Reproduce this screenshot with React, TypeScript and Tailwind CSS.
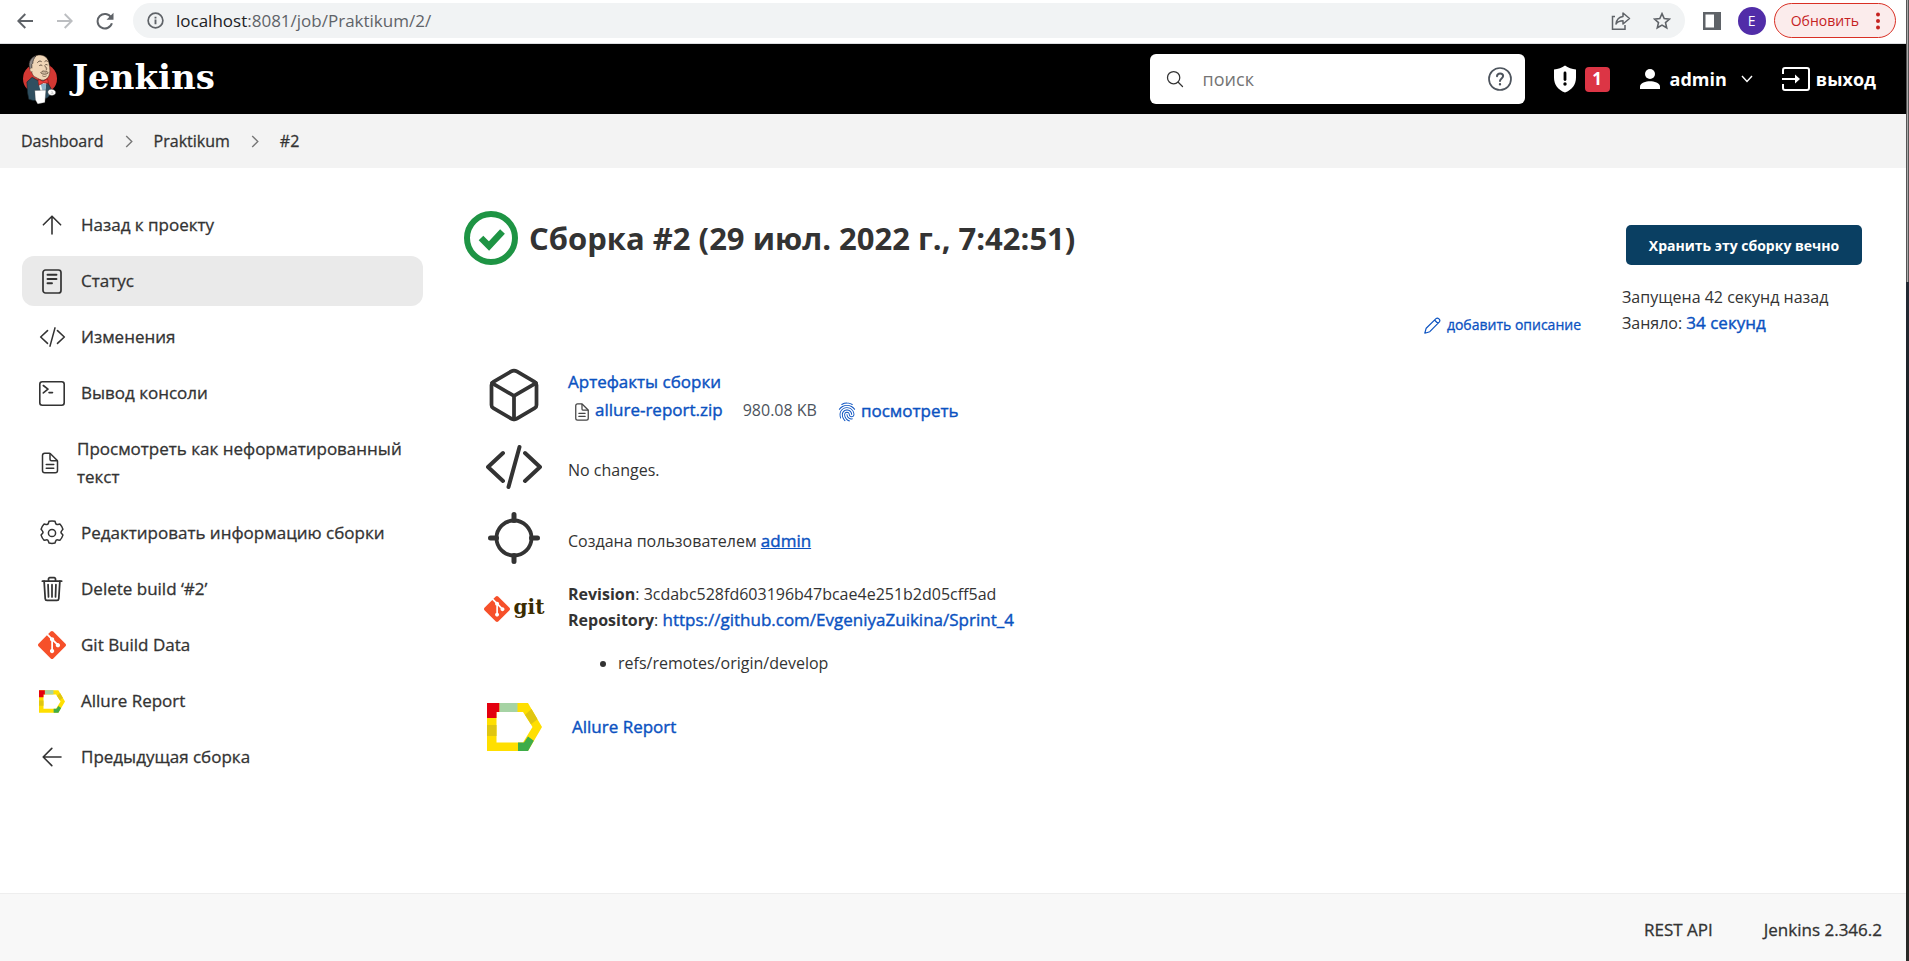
import type { ReactNode } from "react";
import {
  IoCubeOutline,
  IoDocumentTextOutline,
  IoFingerPrintOutline,
  IoSearchOutline,
  IoTrashOutline,
} from "react-icons/io5";
import { SiGit } from "react-icons/si";

const link = "text-[17px] text-[#0b52c1] [-webkit-text-stroke:0.4px] hover:underline";

function ArrowIcon({ className }: { className: string }) {
  return (
    <svg viewBox="0 0 20 20" className={className} fill="none" stroke="currentColor" strokeWidth="1.6" strokeLinecap="round" strokeLinejoin="round" aria-hidden="true">
      <path d="M19 10H1.5M9.8 1.4L1.2 10l8.6 8.6" />
    </svg>
  );
}

function BrowserArrow({ className }: { className: string }) {
  return (
    <svg viewBox="0 0 16 16" className={className} fill="none" stroke="currentColor" strokeWidth="1.9" aria-hidden="true">
      <path d="M16 8H1.500M8.300 1L1.300 8l7 7" />
    </svg>
  );
}

function CodeIcon({ className, weight }: { className: string; weight: number }) {
  return (
    <svg viewBox="0 0 56 44" className={className} fill="none" stroke="currentColor" strokeWidth={weight} strokeLinecap="round" strokeLinejoin="round" aria-hidden="true">
      <path d="M17 8L2 22l15 14M39 8l15 14-15 14M33.500 2L22.500 42" />
    </svg>
  );
}

function StatusIcon() {
  return (
    <svg viewBox="0 0 20 25" className="h-[25px] w-5" fill="none" stroke="currentColor" strokeLinecap="round" aria-hidden="true">
      <rect x="1" y="1" width="18" height="23" rx="2.500" strokeWidth="1.700" />
      <path d="M5.500 5.800h9M5.500 10h9M5.500 14.200h4.500" strokeWidth="1.900" />
    </svg>
  );
}

function ConsoleIcon() {
  return (
    <svg viewBox="0 0 26 25" className="h-[25px] w-[26px]" fill="none" stroke="currentColor" strokeWidth="1.600" strokeLinecap="round" strokeLinejoin="round" aria-hidden="true">
      <rect x="0.800" y="0.800" width="24.400" height="23.400" rx="2.500" />
      <path d="M4.300 4.500l4.700 3.700-4.700 3.700M10 11.600h3.500" />
    </svg>
  );
}

function GearIcon() {
  return (
    <svg viewBox="0 0 24 26" className="h-[26px] w-6" fill="none" stroke="currentColor" strokeWidth="1.500" strokeLinejoin="round" aria-hidden="true">
      <path d="M9 1.300c2-.5 4-.5 6 0l.6 1.900c.3 1 1.300 1.500 2.300 1.300l2-.4c1.400 1.500 2.400 3.200 3 5.200l-1.300 1.600c-.7.800-.7 1.900 0 2.700l1.300 1.500c-.6 2-1.600 3.700-3 5.200l-2-.4c-1-.2-2 .3-2.300 1.300l-.6 1.900c-2 .5-4 .5-6 0l-.6-1.900c-.3-1-1.300-1.500-2.300-1.300l-2 .4c-1.400-1.500-2.400-3.200-3-5.200l1.300-1.500c.7-.8.7-1.900 0-2.700L1.100 9.300c.6-2 1.600-3.700 3-5.200l2 .4c1 .2 2-.3 2.300-1.300z" />
      <circle cx="12" cy="13" r="3.600" />
    </svg>
  );
}

function AllureIcon({ className }: { className: string }) {
  return (
    <svg viewBox="0 0 55 48" className={className} aria-hidden="true">
      <path fill="#ffdf00" d="M0 0h41l14 24-14 24H0zM9.500 9v30.500H36L45.500 24 36 9z" fillRule="evenodd" />
      <path fill="#e3000f" d="M0 0h12.500v9h-3v6H0z" />
      <path fill="#a6d3a4" d="M12.500 0h18v9h-18z" />
      <path fill="#e0c611" d="M44.500 6l6 10.300-6.500 5L38 11.800zM0 22h9.500v11H0z" />
      <path fill="#3eac49" d="M41 33.500l5.800 4.300L41 48H31v-8.500h6z" />
    </svg>
  );
}

function ButlerLogo() {
  return (
    <svg viewBox="35 27 110 155" className="h-[51px] w-9" aria-hidden="true">
      <ellipse cx="90" cy="102" rx="52" ry="48" fill="#d33833" />
      <path d="M50 112l16-14 18 10 22-1 8 8 10 18-4 20-8 8-42 8-14-4-4-20z" fill="#2f4f60" stroke="#17262e" strokeWidth="2" />
      <path d="M84 108l8 34 14-4 4-30z" fill="#f4f4f0" />
      <path d="M92 118l6 22 8-2 3-20z" fill="#8db3c9" />
      <path d="M60 66c-5-18 8-34 26-36 18-2 30 10 32 28 2 14 4 24-1 36-5 10-14 14-22 12-10-2-14-8-22-10-6-6-8-10-8-16-5-2-6-8-5-14z" fill="#f0d6b7" stroke="#3a2c20" strokeWidth="1.500" />
      <path d="M58 68c-5-18 6-32 20-36-7 8-10 15-10 23l-3 3v12l-4 4z" fill="#8e8a88" stroke="#26211e" strokeWidth="2" />
      <path d="M66 70c-5-3-8 2-6 7s6 5 7 2" fill="#f0d6b7" stroke="#6d5948" strokeWidth="1.500" />
      <path d="M82 53c4-5 9-6 13-3M104 50c4-4 8-3 10 0M88 62c3-2 6-2 9 0M106 60c3-2 5-1 7 0" fill="none" stroke="#33261c" strokeWidth="2.500" />
      <path d="M103 62c7 5 10 10 5 15M92 84c5-7 11-7 14-3 5-3 8 0 9 4-8 5-16 5-23-1z" fill="#cbb499" stroke="#493728" strokeWidth="2" />
      <path d="M97 93c4 3 9 3 13 0" fill="none" stroke="#493728" strokeWidth="2" />
      <path d="M84 103l15 7 14-8 3 14-16-1-14 7z" fill="#ef3d3a" stroke="#7d1513" strokeWidth="2" />
      <path d="M74 138l34-1-3 38-22 4-7-12z" fill="#fff" stroke="#3c3c3c" strokeWidth="1" />
      <path d="M116 137c8-6 20-2 22 6 1 9-9 12-18 9-6-3-8-10-4-15z" fill="#fff" stroke="#4a4a4a" strokeWidth="1.500" />
      <path d="M125 141l5 3M123 146l8 1" stroke="#888" strokeWidth="1.500" />
    </svg>
  );
}

type Task = { label: string; icon: ReactNode; active?: boolean; tight?: boolean };

const tasks: Task[] = [
  { label: "Назад к проекту", icon: <ArrowIcon className="size-5 rotate-90" /> },
  { label: "Статус", icon: <StatusIcon />, active: true },
  { label: "Изменения", icon: <CodeIcon className="h-5 w-[27px]" weight={3.4} /> },
  { label: "Вывод консоли", icon: <ConsoleIcon /> },
  {
    label: "Просмотреть как неформатированный текст",
    icon: <IoDocumentTextOutline className="size-6" />,
    tight: true,
  },
  { label: "Редактировать информацию сборки", icon: <GearIcon /> },
  { label: "Delete build ‘#2’", icon: <IoTrashOutline className="size-7" /> },
  { label: "Git Build Data", icon: <SiGit className="size-7 text-[#f6502a]" /> },
  { label: "Allure Report", icon: <AllureIcon className="h-[23px] w-[26px]" /> },
  { label: "Предыдущая сборка", icon: <ArrowIcon className="size-5" /> },
];

function BrowserBar() {
  return (
    <div className="flex h-11 items-center border-b border-[#dcdee1] bg-white pr-[10px] pb-[2px] pl-3 text-[#5f6368]">
      <div className="flex items-center gap-[14px]">
        <button aria-label="Назад" className="grid size-[26px] place-items-center">
          <BrowserArrow className="size-4" />
        </button>
        <button aria-label="Вперёд" disabled className="grid size-[26px] place-items-center text-[#bcbec1]">
          <BrowserArrow className="size-4 rotate-180" />
        </button>
        <button aria-label="Обновить страницу" className="grid size-[26px] place-items-center">
          <svg viewBox="0 0 18 18" className="size-[18px]" aria-hidden="true">
            <path d="M15.200 5.500A7.300 7.300 0 1 0 15.900 11.300" fill="none" stroke="currentColor" strokeWidth="2" />
            <path d="M17.500.8v7h-7z" fill="currentColor" />
          </svg>
        </button>
      </div>
      <div className="ml-[15px] flex h-[35px] flex-1 items-center rounded-full bg-[#f1f3f4] px-[14px]">
        <svg viewBox="0 0 18 18" className="size-[17px]" aria-hidden="true">
          <circle cx="9" cy="9" r="7.800" fill="none" stroke="currentColor" strokeWidth="1.800" />
          <path d="M8 8h2v5H8zM8 5h2v2H8z" fill="currentColor" />
        </svg>
        <div className="ml-3 flex-1 text-[17px]">
          <span className="text-[#202124]">localhost</span>:8081/job/Praktikum/2/
        </div>
        <button aria-label="Поделиться" className="mr-[22px]">
          <svg viewBox="0 0 20 18" className="h-[18px] w-5" fill="none" stroke="currentColor" strokeWidth="1.500" aria-hidden="true">
            <path d="M4 4.500H1.500v12.700H14V13" />
            <path d="M12 1l6.500 5.500L12 12V8.800c-3.500 0-5.500 1-7 3.200.6-4.500 3-7 7-7.500z" strokeLinejoin="round" />
          </svg>
        </button>
        <button aria-label="Добавить в закладки">
          <svg viewBox="0 0 18 18" className="size-[18px]" fill="none" stroke="currentColor" strokeWidth="1.600" aria-hidden="true">
            <path d="M9 1.700l2.200 4.900 5.300.5-4 3.500 1.200 5.200L9 13.100l-4.700 2.700 1.200-5.200-4-3.500 5.300-.5z" />
          </svg>
        </button>
      </div>
      <button aria-label="Боковая панель" className="ml-[18px]">
        <svg viewBox="0 0 18 18" className="size-[18px]" aria-hidden="true">
          <path d="M0 0h18v18H0zM2.500 2.500v13H11v-13z" fill="currentColor" fillRule="evenodd" />
        </svg>
      </button>
      <button className="ml-[17px] size-7 rounded-full bg-[#512da8] text-sm text-white">E</button>
      <button className="ml-2 flex h-[35px] items-center justify-between gap-[17px] rounded-full border border-[#d93025] bg-[#fbecec] pr-[15px] pl-4 text-sm text-[#c5221f]">
        Обновить
        <svg viewBox="0 0 4 18" className="h-[18px] w-1" fill="currentColor" aria-hidden="true">
          <circle cx="2" cy="2.500" r="2" />
          <circle cx="2" cy="9" r="2" />
          <circle cx="2" cy="15.500" r="2" />
        </svg>
      </button>
    </div>
  );
}

function Header() {
  return (
    <header className="flex h-[70px] items-center bg-black pr-[30px] pl-[22px] text-white">
      <a href="#" className="flex items-center gap-[14px]">
        <ButlerLogo />
        <span className="pb-1 font-['DejaVu_Serif',serif] text-[34px] leading-10 font-bold">Jenkins</span>
      </a>
      <form className="ml-auto flex h-[50px] w-[375px] items-center rounded-md bg-white pr-[13px] pl-[15px] text-[#333]">
        <IoSearchOutline className="size-5" aria-hidden="true" />
        <input aria-label="поиск" placeholder="поиск" className="ml-[18px] min-w-0 flex-1 text-[18px] outline-none placeholder:text-[#757575]" />
        <a href="#" aria-label="Справка">
          <svg viewBox="0 0 24 24" className="size-6" fill="none" stroke="#4d545d" strokeWidth="1.700" strokeLinecap="round" aria-hidden="true">
            <circle cx="12" cy="12" r="11" />
            <path d="M9 9.200c.2-1.800 1.500-2.700 3.100-2.700 1.700 0 3 1 3 2.600 0 2.400-3.100 2.400-3.100 5" strokeWidth="2" />
            <circle cx="12" cy="17.200" r="0.600" strokeWidth="1.200" />
          </svg>
        </a>
      </form>
      <a href="#" className="ml-7 flex items-center gap-2">
        <svg viewBox="0 0 24 28" className="h-7 w-6" aria-hidden="true">
          <path d="M12 .5c3 2.500 7 3.500 11 4v8c0 7-4 12.500-11 15-7-2.500-11-8-11-15v-8c4-.5 8-1.500 11-4z" fill="#fff" />
          <path d="M12 8v6.500" stroke="#000" strokeWidth="2.800" strokeLinecap="round" />
          <circle cx="12" cy="19" r="1.700" />
        </svg>
        <span className="grid size-[25px] place-items-center rounded-[4px] bg-[#dc3545] text-[17px] leading-6 font-bold">1</span>
      </a>
      <a href="#" className="ml-[30px] flex items-center gap-[10px] text-[18px] font-bold">
        <svg viewBox="0 0 20 20" className="size-5" fill="#fff" aria-hidden="true">
          <circle cx="10" cy="5" r="5" />
          <path d="M0 20v-2.500C0 14 6 12.300 10 12.300s10 1.700 10 5.200V20z" />
        </svg>
        admin
      </a>
      <button aria-label="Меню пользователя" className="ml-[14px]">
        <svg viewBox="0 0 12 8" className="h-2 w-3" fill="none" stroke="#fff" strokeWidth="1.400" aria-hidden="true">
          <path d="M1 1l5 5.500L11 1" />
        </svg>
      </button>
      <a href="#" className="ml-[29px] flex items-center gap-[6px] text-[18px] font-bold">
        <svg viewBox="0 0 28 24" className="h-6 w-7" fill="none" stroke="#fff" strokeWidth="2" aria-hidden="true">
          <path d="M1 7V3a2 2 0 0 1 2-2h22a2 2 0 0 1 2 2v18a2 2 0 0 1-2 2H3a2 2 0 0 1-2-2v-4M0 12h16" />
          <path d="M13 7.500l5 4.500-5 4.500z" fill="#fff" stroke="none" />
        </svg>
        выход
      </a>
    </header>
  );
}

function Crumb() {
  return (
    <svg viewBox="0 0 8 14" className="h-[13px] w-2" fill="none" stroke="#777" strokeWidth="1.500" aria-hidden="true">
      <path d="M1 1l6 6-6 6" />
    </svg>
  );
}

function Row({ icon, children }: { icon: ReactNode; children: ReactNode }) {
  return (
    <div className="flex gap-[26px]">
      <div className="flex h-14 w-14 shrink-0 items-center justify-center">{icon}</div>
      <div className="flex-1">{children}</div>
    </div>
  );
}

export default function App() {
  return (
    <div className="flex min-h-screen bg-white font-['Open_Sans','Noto_Sans',sans-serif] text-base text-[#333]">
      <div className="flex min-w-0 flex-1 flex-col">
        <BrowserBar />
        <Header />
        <nav aria-label="Навигация" className="flex h-[54px] items-center gap-[21px] bg-[#f3f3f3] px-[21px] [-webkit-text-stroke:0.3px]">
          <a href="#">Dashboard</a>
          <Crumb />
          <a href="#">Praktikum</a>
          <Crumb />
          <a href="#">#2</a>
        </nav>

        <div className="flex flex-1">
          <nav aria-label="Задачи" className="flex w-[464px] shrink-0 flex-col gap-[6px] pt-8 pr-[41px] pl-[22px]">
            {tasks.map((task) => (
              <a
                key={task.label}
                href="#"
                className={`flex items-center gap-[15px] rounded-xl py-[11px] pl-4 text-[17px] leading-7 [-webkit-text-stroke:0.3px] ${
                  task.active ? "bg-[#eaeaea]" : ""
                }`}
              >
                <span className={`grid h-7 shrink-0 place-items-center ${task.tight ? "w-6" : "w-7"}`}>{task.icon}</span>
                {task.label}
              </a>
            ))}
          </nav>

          <main className="min-w-0 flex-1">
            <h1 className="flex items-center gap-[11px] pt-[43px] text-[31px] leading-[54px] font-bold">
              <svg viewBox="0 0 54 54" className="size-[54px]" aria-label="Успешно" role="img">
                <circle cx="27" cy="27" r="24" fill="none" stroke="#1e9444" strokeWidth="6" />
                <path d="M17 27l8 8L38.500 20.500" fill="none" stroke="#1e9444" strokeWidth="6.500" />
              </svg>
              Сборка #2 (29 июл. 2022 г., 7:42:51)
            </h1>
            <div className="mt-[49px] flex justify-end pr-[41px]">
              <a href="#" className="flex items-center gap-[6px] text-[14px] leading-[22px] text-[#0b52c1] [-webkit-text-stroke:0.3px]">
                <svg viewBox="0 0 17 17" className="size-[17px]" fill="none" stroke="currentColor" strokeWidth="1.200" strokeLinejoin="round" aria-hidden="true">
                  <path d="M.8 16.200l1.400-5L12 1.600c1.800-1.600 4.900 1.300 3.400 3.200L5.800 14.700zM10.500 3l3.500 3.500" />
                </svg>
                добавить описание
              </a>
            </div>

            <div className="mt-[31px] flex flex-col gap-[15px] pl-[22px]">
              <Row icon={<IoCubeOutline className="size-[60px] shrink-0" />}>
                <a href="#" className={`block pt-px leading-7 ${link}`}>Артефакты сборки</a>
                <div className="flex items-center pl-1 leading-[27px]">
                  <a href="#" className={`flex items-center gap-[3px] leading-7 ${link}`}>
                    <IoDocumentTextOutline className="mt-1 size-5 text-[#444]" aria-hidden="true" />
                    allure-report.zip
                  </a>
                  <span className="ml-5 text-[#4d545d]">980.08 KB</span>
                  <a href="#" className={`ml-5 flex items-center gap-1 ${link}`}>
                    <IoFingerPrintOutline className="mt-1 size-5" aria-hidden="true" />
                    посмотреть
                  </a>
                </div>
              </Row>
              <Row icon={<CodeIcon className="h-11 w-14" weight={4} />}>
                <p className="pt-[17px] leading-7">No changes.</p>
              </Row>
              <Row
                icon={
                  <svg viewBox="0 0 52 52" className="size-[52px]" fill="none" stroke="currentColor" strokeLinecap="round" aria-hidden="true">
                    <circle cx="26" cy="26" r="17.500" strokeWidth="3.800" />
                    <path d="M26 2.500v6M26 43.500v6M2.500 26h6M43.500 26h6" strokeWidth="5" />
                  </svg>
                }
              >
                <p className="pt-[17px] leading-7">
                  Создана пользователем{" "}
                  <a href="#" className="text-[17px] text-[#0b52c1] underline [-webkit-text-stroke:0.4px]">admin</a>
                </p>
              </Row>
              <Row
                icon={
                  <span className="flex items-center gap-1">
                    <SiGit className="size-[26px] shrink-0 text-[#f6502a]" aria-hidden="true" />
                    <span className="pb-1 font-['DejaVu_Serif',serif] text-[20px] leading-6 font-bold text-[#3a2c00]">git</span>
                  </span>
                }
              >
                <p className="leading-[26px]">
                  <b>Revision</b>: 3cdabc528fd603196b47bcae4e251b2d05cff5ad
                  <br />
                  <b>Repository</b>: <a href="#" className={link}>https://github.com/EvgeniyaZuikina/Sprint_4</a>
                </p>
                <ul className="mt-[17px] list-disc pb-2 pl-[50px] leading-[26px]">
                  <li>refs/remotes/origin/develop</li>
                </ul>
              </Row>
              <Row icon={<AllureIcon className="h-12 w-[55px]" />}>
                <p className="pt-[14px] pl-1 leading-7">
                  <a href="#" className={link}>Allure Report</a>
                </p>
              </Row>
            </div>
          </main>

          <aside className="w-[284px] shrink-0 pt-[57px]">
            <button className="ml-1 h-10 w-[236px] rounded-[5px] bg-[#0a3f62] text-[14px] font-bold text-white">
              Хранить эту сборку вечно
            </button>
            <p className="mt-[19px] leading-[26px]">
              Запущена 42 секунд назад
              <br />
              Заняло: <a href="#" className={link}>34 секунд</a>
            </p>
          </aside>
        </div>

        <footer className="flex h-[68px] items-center justify-end gap-[51px] border-t border-[#eee] bg-[#f8f8f8] pt-1 pr-6 text-[17px] [-webkit-text-stroke:0.3px]">
          <a href="#">REST API</a>
          <a href="#">Jenkins 2.346.2</a>
        </footer>
      </div>
      <div className="flex w-[3px] shrink-0 flex-col" aria-hidden="true">
        <div className="h-[282px] border-x border-[#555] bg-[#aaa]" />
        <div className="flex-1 bg-linear-to-b from-[#232a35] via-[#10130a] to-[#2a2a28]" />
      </div>
    </div>
  );
}
